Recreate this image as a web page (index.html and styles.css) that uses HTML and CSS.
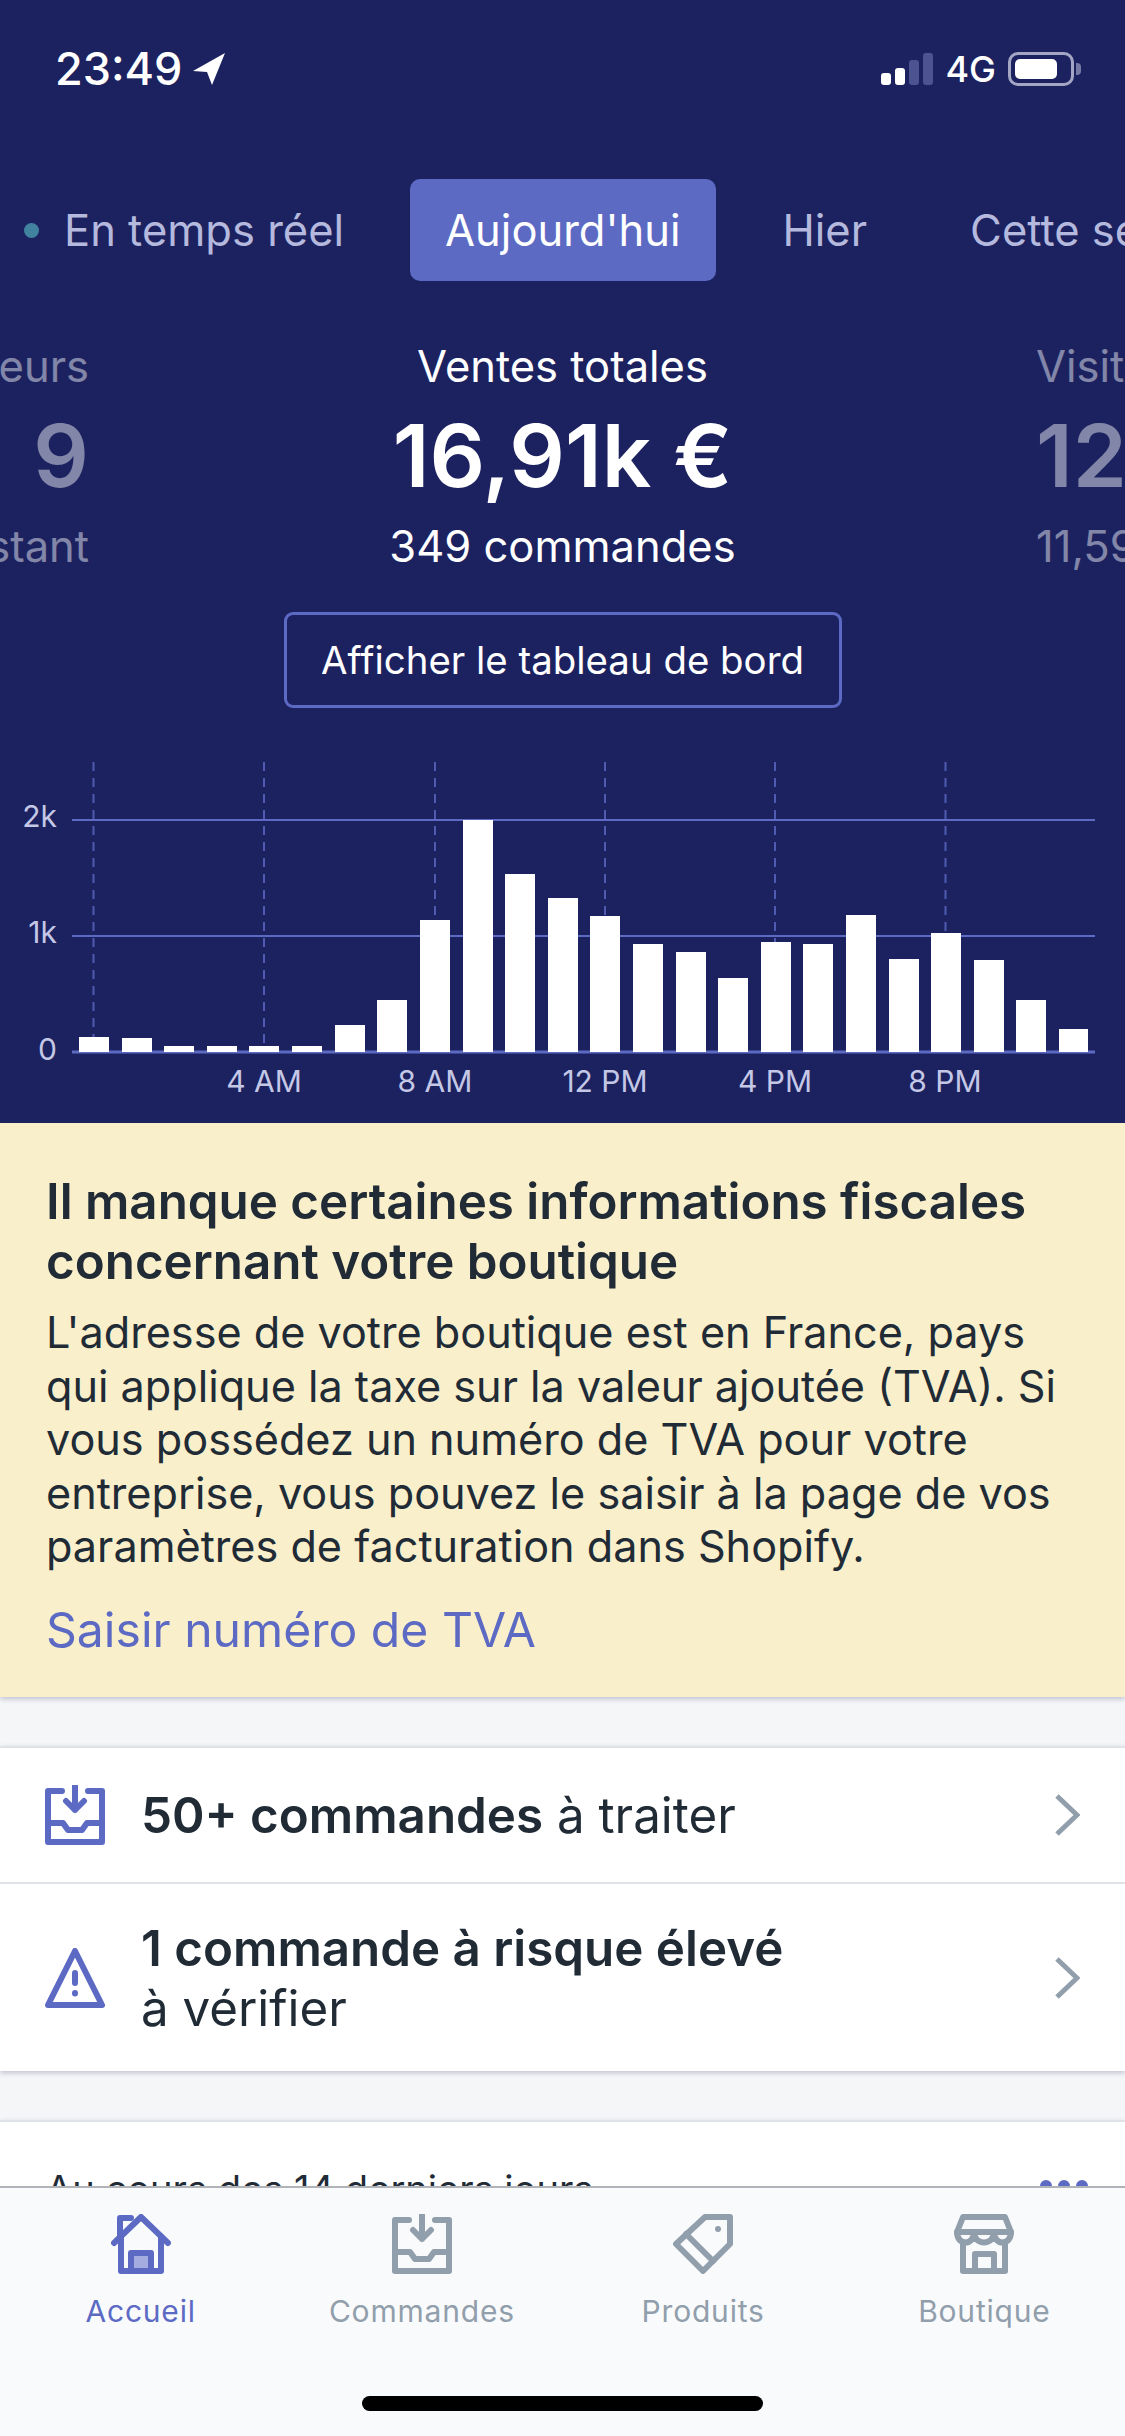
FILE: index.html
```html
<!DOCTYPE html>
<html lang="fr">
<head>
    <meta charset="utf-8">
    <title>Accueil</title>
    <link rel="stylesheet" href="styles.css">
</head>
<body>
    <div class="page">
        <main class="content">
            <section class="hero">
                <div class="status-bar">
                    <div class="status-left">
                        <span class="time">23:49</span>
                        <svg class="location" viewBox="0 0 32 32"><path d="M32 0 L0 18 L14 19 L19 32 Z" fill="#fff"/></svg>
                    </div>
                    <div class="status-right">
                        <div class="signal">
                            <span class="bar bar-1"></span>
                            <span class="bar bar-2"></span>
                            <span class="bar bar-3"></span>
                            <span class="bar bar-4"></span>
                        </div>
                        <span class="network">4G</span>
                        <div class="battery"><span class="battery-level"></span></div>
                        <span class="battery-nub"></span>
                    </div>
                </div>

                <nav class="tabs">
                    <span class="tab tab-live"><span class="live-dot"></span>En temps réel</span>
                    <span class="tab tab-active">Aujourd'hui</span>
                    <span class="tab tab-short">Hier</span>
                    <span class="tab">Cette semaine</span>
                </nav>

                <div class="stats">
                    <div class="stat stat-side stat-left">
                        <div class="stat-label">Visiteurs</div>
                        <div class="stat-value">9</div>
                        <div class="stat-sub">à cet instant</div>
                    </div>
                    <div class="stat stat-main">
                        <div class="stat-label">Ventes totales</div>
                        <div class="stat-value">16,91k €</div>
                        <div class="stat-sub">349 commandes</div>
                    </div>
                    <div class="stat stat-side stat-right">
                        <div class="stat-label">Visites</div>
                        <div class="stat-value">12,4k</div>
                        <div class="stat-sub">11,59k visiteurs</div>
                    </div>
                </div>

                <div class="dashboard-row">
                    <button class="dashboard-button">Afficher le tableau de bord</button>
                </div>

                <svg class="chart" viewBox="0 0 1125 373" width="1125" height="373">
                    <g class="chart-vlines">
                        <line x1="93.5" y1="0" x2="93.5" y2="290"/>
                        <line x1="264" y1="0" x2="264" y2="290"/>
                        <line x1="435" y1="0" x2="435" y2="290"/>
                        <line x1="605" y1="0" x2="605" y2="290"/>
                        <line x1="775" y1="0" x2="775" y2="290"/>
                        <line x1="945.5" y1="0" x2="945.5" y2="290"/>
                    </g>
                    <g class="chart-hlines">
                        <line x1="72" y1="58" x2="1095" y2="58"/>
                        <line x1="72" y1="174" x2="1095" y2="174"/>
                        <line class="chart-base" x1="72" y1="290" x2="1095" y2="290"/>
                    </g>
                    <g class="chart-bars">
                        <rect x="79" y="275" width="30" height="15"/>
                        <rect x="122" y="276" width="30" height="14"/>
                        <rect x="164" y="284" width="30" height="6"/>
                        <rect x="207" y="284" width="30" height="6"/>
                        <rect x="249" y="284" width="30" height="6"/>
                        <rect x="292" y="284" width="30" height="6"/>
                        <rect x="335" y="263" width="30" height="27"/>
                        <rect x="377" y="238" width="30" height="52"/>
                        <rect x="420" y="158" width="30" height="132"/>
                        <rect x="463" y="58" width="30" height="232"/>
                        <rect x="505" y="112" width="30" height="178"/>
                        <rect x="548" y="136" width="30" height="154"/>
                        <rect x="590" y="154" width="30" height="136"/>
                        <rect x="633" y="182" width="30" height="108"/>
                        <rect x="676" y="190" width="30" height="100"/>
                        <rect x="718" y="216" width="30" height="74"/>
                        <rect x="761" y="180" width="30" height="110"/>
                        <rect x="803" y="182" width="30" height="108"/>
                        <rect x="846" y="153" width="30" height="137"/>
                        <rect x="889" y="197" width="30" height="93"/>
                        <rect x="931" y="171" width="30" height="119"/>
                        <rect x="974" y="198" width="30" height="92"/>
                        <rect x="1016" y="238" width="30" height="52"/>
                        <rect x="1059" y="267" width="29" height="23"/>
                    </g>
                    <g class="chart-y">
                        <text x="57" y="65">2k</text>
                        <text x="57" y="181">1k</text>
                        <text x="57" y="298">0</text>
                    </g>
                    <g class="chart-x">
                        <text x="264" y="330">4 AM</text>
                        <text x="435" y="330">8 AM</text>
                        <text x="605" y="330">12 PM</text>
                        <text x="775" y="330">4 PM</text>
                        <text x="945" y="330">8 PM</text>
                    </g>
                </svg>
            </section>

            <section class="notice">
                <h2 class="notice-title">Il manque certaines informations fiscales concernant votre boutique</h2>
                <p class="notice-text">L'adresse de votre boutique est en France, pays qui applique la taxe sur la valeur ajoutée (TVA). Si vous possédez un numéro de TVA pour votre entreprise, vous pouvez le saisir à la page de vos paramètres de facturation dans Shopify.</p>
                <a class="notice-link">Saisir numéro de TVA</a>
            </section>

            <section class="card tasks">
                <div class="task task-single">
                    <svg class="task-icon" viewBox="0 0 60 60">
                        <path d="M17 6 H3 V57 H57 V6 H43"/>
                        <path d="M3 38 H18 L23 45 H37 L42 38 H57"/>
                        <path d="M30 1 V25 M21 16 L30 25 L39 16"/>
                    </svg>
                    <div class="task-text"><b>50+ commandes</b> à traiter</div>
                    <svg class="chevron" viewBox="0 0 26 42"><path d="M3 2 L23 21 L3 40"/></svg>
                </div>
                <div class="task task-double">
                    <svg class="task-icon" viewBox="0 0 60 60">
                        <path d="M30 3 L57 57 H3 Z"/>
                        <path d="M30 25 V35 M30 45 V45.5"/>
                    </svg>
                    <div class="task-text"><b>1 commande à risque élevé</b><br>à vérifier</div>
                    <svg class="chevron" viewBox="0 0 26 42"><path d="M3 2 L23 21 L3 40"/></svg>
                </div>
            </section>

            <section class="card recent">
                <span class="recent-title">Au cours des 14 derniers jours</span>
                <span class="recent-more"><i></i><i></i><i></i></span>
            </section>
        </main>

        <footer class="tabbar">
            <div class="tabbar-items">
                <div class="tabbar-item tabbar-active">
                    <svg class="tabbar-icon" viewBox="0 0 60 60">
                        <path class="door-fill" d="M21 40 H39 V55 H21 Z"/>
                        <path d="M3 29 L30 3 L57 29"/>
                        <path d="M10 23 V57 H50 V23"/>
                        <path d="M9 21 V4 H20"/>
                        <path d="M20 57 V39 H40 V57"/>
                    </svg>
                    <span class="tabbar-label">Accueil</span>
                </div>
                <div class="tabbar-item">
                    <svg class="tabbar-icon" viewBox="0 0 60 60">
                        <path d="M17 6 H3 V57 H57 V6 H43"/>
                        <path d="M3 38 H18 L23 45 H37 L42 38 H57"/>
                        <path d="M30 1 V25 M21 16 L30 25 L39 16"/>
                    </svg>
                    <span class="tabbar-label">Commandes</span>
                </div>
                <div class="tabbar-item">
                    <svg class="tabbar-icon" viewBox="0 0 60 60">
                        <path d="M57 3 H32 L3 30 L30 57 L57 30 Z"/>
                        <path d="M13 20 L40 47"/>
                        <circle class="tag-dot" cx="45" cy="15" r="3"/>
                    </svg>
                    <span class="tabbar-label">Produits</span>
                </div>
                <div class="tabbar-item">
                    <svg class="tabbar-icon" viewBox="0 0 60 60">
                        <path d="M9 3 H51 L57 18 H3 Z"/>
                        <path d="M3 18 C3 32 20 32 20 18 C20 32 40 32 40 18 C40 32 57 32 57 18"/>
                        <path d="M9 28 V57 H51 V28"/>
                        <path d="M21 57 V40 H40 V57"/>
                    </svg>
                    <span class="tabbar-label">Boutique</span>
                </div>
            </div>
            <div class="home-indicator"></div>
        </footer>
    </div>
</body>
</html>
```
FILE: styles.css
```css
* {
    box-sizing: border-box;
}
body {
    margin: 0;
    font-family: Inter, "Noto Sans", sans-serif;
    background-color: #f4f6f8;
    color: #212b36;
}
.page {
    width: 1125px;
    height: 2436px;
    display: flex;
    flex-direction: column;
    overflow: hidden;
}
.content {
    flex: 1;
    min-height: 0;
    overflow: hidden;
}

/* haut de page */
.hero {
    height: 1123px;
    background-color: #1c2260;
    color: #fff;
    overflow: hidden;
}
.status-bar {
    height: 179px;
    padding: 46px 44px 0 55px;
    display: flex;
    justify-content: space-between;
    align-items: flex-start;
}
.status-left {
    display: flex;
    align-items: center;
    gap: 11px;
}
.time {
    font-size: 45px;
    line-height: 46px;
    font-weight: 500;
}
.location {
    width: 32px;
    height: 32px;
}
.status-right {
    display: flex;
    align-items: center;
    height: 46px;
}
.signal {
    display: flex;
    align-items: flex-end;
    gap: 4px;
    height: 32px;
    margin-right: 12px;
}
.bar {
    width: 10px;
    border-radius: 3px;
    background-color: #fff;
}
.bar-1 { height: 12px; }
.bar-2 { height: 17px; }
.bar-3 { height: 25px; background-color: #4d5391; }
.bar-4 { height: 32px; background-color: #4d5391; }
.network {
    font-size: 36px;
    font-weight: 500;
    margin-right: 12px;
}
.battery {
    width: 66px;
    height: 34px;
    padding: 4px;
    border: 3px solid #a4a7c4;
    border-radius: 10px;
}
.battery-level {
    display: block;
    width: 42px;
    height: 100%;
    background-color: #fff;
    border-radius: 5px;
}
.battery-nub {
    width: 5px;
    height: 12px;
    margin-left: 2px;
    background-color: #777ba6;
    border-radius: 0 4px 4px 0;
}

.tabs {
    display: flex;
    gap: 30px;
    padding-left: 24px;
    white-space: nowrap;
}
.tab {
    height: 102px;
    padding: 0 37px;
    display: flex;
    align-items: center;
    font-size: 43.5px;
    color: #b4b9dd;
    border-radius: 10px;
}
.tab-live {
    padding: 0 36px 0 0;
}
.tab-active {
    padding: 0 35px;
    background-color: #5c6ac4;
    color: #fff;
}
.tab-short {
    padding-right: 36px;
}
.live-dot {
    width: 15px;
    height: 15px;
    margin-right: 25px;
    border-radius: 50%;
    background-color: #41839f;
}

.stats {
    display: grid;
    grid-template-columns: 89px 947px 89px;
    margin-top: 55px;
    white-space: nowrap;
}
.stat {
    display: flex;
    flex-direction: column;
}
.stat-main {
    align-items: center;
}
.stat-left {
    align-items: flex-end;
}
.stat-right {
    align-items: flex-start;
}
.stat-side {
    opacity: 0.45;
}
.stat-label,
.stat-sub {
    font-size: 43.5px;
    line-height: 60px;
}
.stat-value {
    font-size: 87px;
    line-height: 120px;
    font-weight: 600;
}
.dashboard-row {
    display: flex;
    justify-content: center;
    margin-top: 36px;
}
.dashboard-button {
    width: 558px;
    height: 96px;
    padding: 0;
    background: none;
    border: 3px solid #5c6ac4;
    border-radius: 9px;
    color: #fff;
    font-family: inherit;
    font-size: 38.4px;
}

.chart {
    display: block;
    margin-top: 54px;
}
.chart-vlines line {
    stroke: #5c6ac4;
    stroke-width: 2;
    stroke-dasharray: 9 7;
    opacity: 0.8;
}
.chart-hlines line {
    stroke: #5c6ac4;
    stroke-width: 2;
}
.chart-hlines .chart-base {
    stroke-width: 3;
}
.chart-bars rect {
    fill: #fff;
}
.chart-y text,
.chart-x text {
    fill: #c4c8e6;
    font-size: 30px;
}
.chart-y text {
    text-anchor: end;
}
.chart-x text {
    text-anchor: middle;
}

/* avertissement */
.notice {
    height: 574px;
    padding: 48px 46px 0;
    background-color: #f9efcb;
    box-shadow: 0 2px 5px rgba(66, 71, 112, 0.3);
    position: relative;
}
.notice-title {
    margin: 0 0 15px;
    font-size: 49.3px;
    line-height: 60px;
    font-weight: 600;
}
.notice-text {
    margin: 0 0 26px;
    font-size: 43.2px;
    line-height: 53.6px;
}
.notice-link {
    font-size: 48.1px;
    line-height: 60px;
    color: #5c6ac4;
}

/* cartes */
.card {
    background-color: #fff;
    border-top: 2px solid #dfe3e8;
    box-shadow: 0 2px 5px rgba(66, 71, 112, 0.3);
}
.tasks {
    margin-top: 49px;
}
.task {
    display: flex;
    align-items: center;
    padding: 0 45px;
    font-size: 49.3px;
    line-height: 60px;
}
.task-single {
    height: 136px;
    border-bottom: 2px solid #dfe3e8;
}
.task-double {
    height: 187px;
}
.task-text {
    flex: 1;
    margin-left: 36px;
}
.task-text b {
    font-weight: 600;
}
.task-icon {
    width: 60px;
    height: 60px;
    fill: none;
    stroke: #5c6ac4;
    stroke-width: 6;
    stroke-linejoin: round;
    stroke-linecap: round;
}
.chevron {
    width: 26px;
    height: 42px;
    fill: none;
    stroke: #919eab;
    stroke-width: 5;
}

.recent {
    margin-top: 49px;
    height: 120px;
    padding: 42px 37px 0 46px;
    display: flex;
    justify-content: space-between;
}
.recent-title {
    font-size: 38.1px;
    line-height: 50px;
}
.recent-more {
    display: flex;
    gap: 6px;
    padding-top: 16px;
}
.recent-more i {
    width: 12px;
    height: 12px;
    border-radius: 50%;
    background-color: #5c6ac4;
}

/* barre du bas */
.tabbar {
    height: 250px;
    flex-shrink: 0;
    background-color: #f9fafc;
    border-top: 2px solid #b0b3b8;
    position: relative;
}
.tabbar-items {
    display: grid;
    grid-template-columns: repeat(4, 1fr);
    padding-top: 26px;
}
.tabbar-item {
    display: flex;
    flex-direction: column;
    align-items: center;
    color: #919eab;
}
.tabbar-active {
    color: #5c6ac4;
}
.tabbar-icon {
    width: 60px;
    height: 60px;
    fill: none;
    stroke: currentColor;
    stroke-width: 6;
    stroke-linejoin: round;
    stroke-linecap: round;
}
.tabbar-icon .door-fill {
    fill: #a5ace0;
    stroke: none;
}
.tabbar-icon .tag-dot {
    fill: currentColor;
    stroke: none;
}
.tabbar-label {
    margin-top: 19px;
    font-size: 30px;
    line-height: 36px;
    font-weight: 400;
    letter-spacing: 0.8px;
}
.home-indicator {
    width: 401px;
    height: 15px;
    margin: 67px auto 0;
    background-color: #000;
    border-radius: 8px;
}
```
